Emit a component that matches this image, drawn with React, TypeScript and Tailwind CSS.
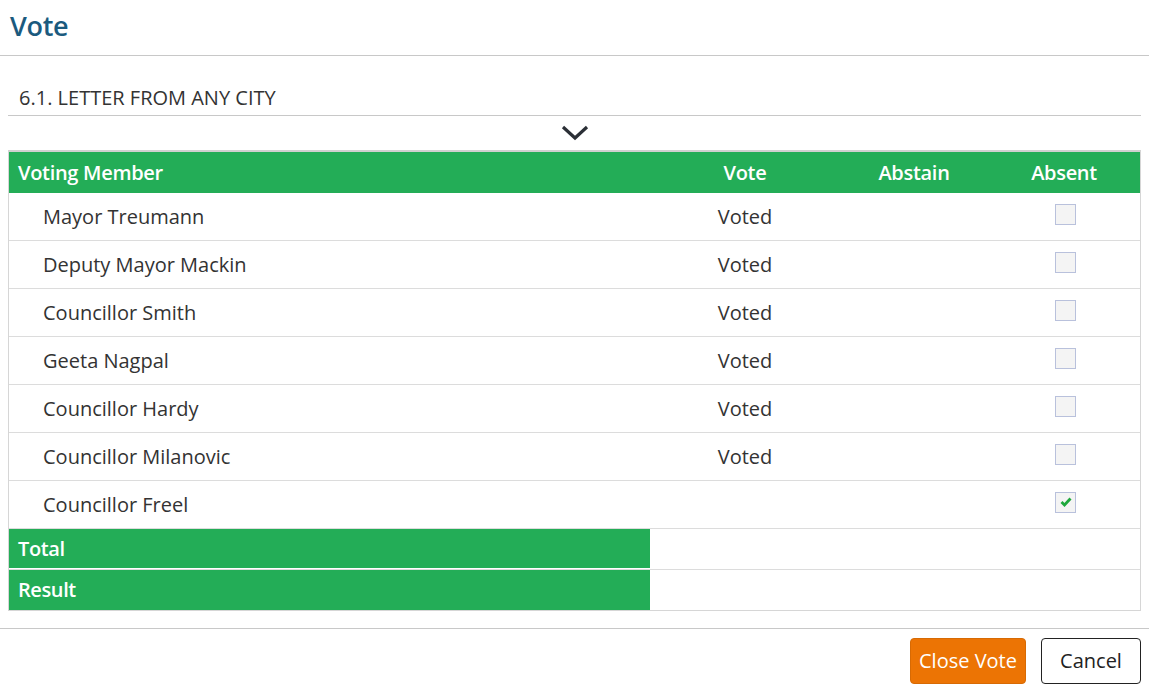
import * as React from "react";

const members = [
  { name: "Mayor Treumann", vote: "Voted", absent: false },
  { name: "Deputy Mayor Mackin", vote: "Voted", absent: false },
  { name: "Councillor Smith", vote: "Voted", absent: false },
  { name: "Geeta Nagpal", vote: "Voted", absent: false },
  { name: "Councillor Hardy", vote: "Voted", absent: false },
  { name: "Councillor Milanovic", vote: "Voted", absent: false },
  { name: "Councillor Freel", vote: "", absent: true },
];

function Checkbox({ checked }: { checked: boolean }) {
  return (
    <span className="flex h-[21px] w-[21px] items-center justify-center border border-[#b9c1dc] bg-[#f4f4f4]">
      {checked && (
        <svg width="12" height="10" viewBox="0 0 12 10">
          <path d="M1.5 5 L4.5 8 L10.5 1.5" fill="none" stroke="#1fa83c" strokeWidth="2.8" />
        </svg>
      )}
    </span>
  );
}

export default function App() {
  return (
    <div className="h-[686px] w-[1149px] overflow-hidden bg-white font-['Open_Sans',sans-serif] text-[#333]">
      {/* header */}
      <div className="flex h-[56px] items-center border-b border-[#c8c8c8] px-[10px] pb-[3px]">
        <h1 className="text-[27px] font-semibold tracking-[-0.3px] text-[#1b5a7e]">Vote</h1>
      </div>

      <div className="px-[8px]">
        <div className="flex h-[60px] items-end border-b border-[#c8c8c8] pb-[2px] pl-[11px] text-[20px] text-[#333]">
          6.1. LETTER FROM ANY CITY
        </div>

        {/* collapse chevron */}
        <div className="flex h-[34px] items-center justify-center">
          <svg width="28" height="18" viewBox="0 0 28 18">
            <path d="M2 3 L14 14 L26 3" fill="none" stroke="#2b2f36" strokeWidth="3.2" />
          </svg>
        </div>

        {/* table */}
        <div className="border-x border-b border-t-2 border-[#d6d6d6] border-t-[#d0d0d0]">
          <div className="flex h-[41px] items-center bg-[#23ad57] text-[20px] font-semibold tracking-[-0.3px] text-white">
            <div className="w-[641px] pl-[9px]">Voting Member</div>
            <div className="w-[190px] text-center">Vote</div>
            <div className="w-[148px] text-center">Abstain</div>
            <div className="flex-1 text-center">Absent</div>
          </div>

          {members.map((m) => (
            <div key={m.name} className="flex h-[48px] items-center border-b border-[#dcdcdc] text-[20px]">
              <div className="w-[641px] pl-[34px]">{m.name}</div>
              <div className="w-[190px] text-center">{m.vote}</div>
              <div className="w-[148px]" />
              <div className="mb-[5px] flex flex-1 justify-center pl-[3px]">
                <Checkbox checked={m.absent} />
              </div>
            </div>
          ))}

          <div className="flex h-[41px] border-b border-[#dcdcdc]">
            <div className="flex w-[641px] items-center border-b border-white bg-[#23ad57] pl-[9px] text-[20px] font-semibold tracking-[-0.4px] text-white">
              Total
            </div>
            <div className="flex-1" />
          </div>
          <div className="flex h-[40px]">
            <div className="flex w-[641px] items-center bg-[#23ad57] pl-[9px] text-[20px] font-semibold tracking-[-0.4px] text-white">
              Result
            </div>
            <div className="flex-1" />
          </div>
        </div>
      </div>

      {/* footer */}
      <div className="mt-[17px] flex justify-end gap-[15px] border-t border-[#c8c8c8] px-[8px] pt-[9px]">
        <button className="h-[46px] w-[116px] rounded-[4px] border border-[#d76a04] bg-[#ec7404] text-[20px] text-white">
          Close Vote
        </button>
        <button className="h-[46px] w-[100px] rounded-[4px] border border-[#222] bg-white text-[20px] text-[#222]">
          Cancel
        </button>
      </div>
    </div>
  );
}
